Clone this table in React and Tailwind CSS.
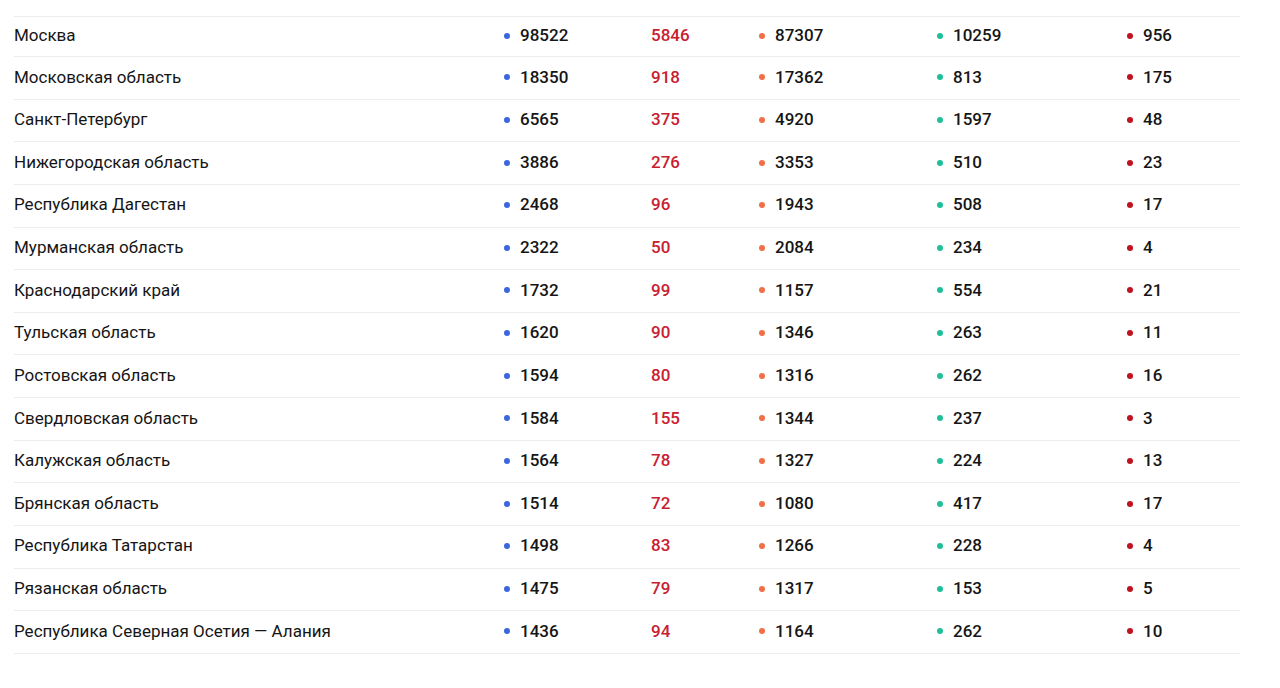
const rows = [
  ['Москва', 98522, 5846, 87307, 10259, 956],
  ['Московская область', 18350, 918, 17362, 813, 175],
  ['Санкт-Петербург', 6565, 375, 4920, 1597, 48],
  ['Нижегородская область', 3886, 276, 3353, 510, 23],
  ['Республика Дагестан', 2468, 96, 1943, 508, 17],
  ['Мурманская область', 2322, 50, 2084, 234, 4],
  ['Краснодарский край', 1732, 99, 1157, 554, 21],
  ['Тульская область', 1620, 90, 1346, 263, 11],
  ['Ростовская область', 1594, 80, 1316, 262, 16],
  ['Свердловская область', 1584, 155, 1344, 237, 3],
  ['Калужская область', 1564, 78, 1327, 224, 13],
  ['Брянская область', 1514, 72, 1080, 417, 17],
  ['Республика Татарстан', 1498, 83, 1266, 228, 4],
  ['Рязанская область', 1475, 79, 1317, 153, 5],
  ['Республика Северная Осетия — Алания', 1436, 94, 1164, 262, 10],
];

function Dot({ className }) {
  return <span className={`inline-block w-[6px] h-[6px] rounded-full mr-[10px] ${className}`} />;
}

export default function App() {
  return (
    <div className="min-h-screen bg-white pt-[16px] pl-[14px] font-['Roboto',sans-serif] text-[#151515]">
      <div className="w-[1226px] border-t border-[#ececec]">
        {rows.map(([name, total, fresh, active, recovered, died], i) => (
          <div
            key={name}
            className={`flex items-center border-b border-[#ececec] text-[17px] pb-[1px] ${i === 0 ? 'h-[40px]' : 'h-[42.64px]'}`}
          >
            <div className="w-[490px]">{name}</div>
            <div className="w-[147px] flex items-center font-medium">
              <Dot className="bg-[#3a67db]" />
              {total}
            </div>
            <div className="w-[108px] font-medium text-[#c8202f]">{fresh}</div>
            <div className="w-[178px] flex items-center font-medium">
              <Dot className="bg-[#ef7046]" />
              {active}
            </div>
            <div className="w-[190px] flex items-center font-medium">
              <Dot className="bg-[#1fbf9a]" />
              {recovered}
            </div>
            <div className="flex-1 flex items-center font-medium">
              <Dot className="bg-[#c1121f]" />
              {died}
            </div>
          </div>
        ))}
      </div>
    </div>
  );
}
